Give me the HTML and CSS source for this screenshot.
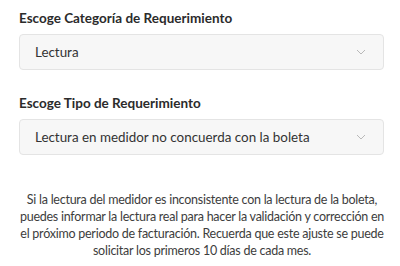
FILE: index.html
```html
<!DOCTYPE html>
<html lang="es">
<head>
<meta charset="utf-8">
<link rel="stylesheet" href="styles.css">
</head>
<body>
<div class="form">
  <div class="field">
    <label class="label">Escoge Categoría de Requerimiento</label>
    <div class="select">
      <span class="value">Lectura</span>
      <svg class="chev" width="10" height="6" viewBox="0 0 10 6"><path d="M1 1 L5 5 L9 1" fill="none" stroke="#b9b9b9" stroke-width="1"/></svg>
    </div>
  </div>
  <div class="field">
    <label class="label">Escoge Tipo de Requerimiento</label>
    <div class="select">
      <span class="value">Lectura en medidor no concuerda con la boleta</span>
      <svg class="chev" width="10" height="6" viewBox="0 0 10 6"><path d="M1 1 L5 5 L9 1" fill="none" stroke="#b9b9b9" stroke-width="1"/></svg>
    </div>
  </div>
  <p class="info">Si la lectura del medidor es inconsistente con la lectura de la boleta, puedes informar la lectura real para hacer la validación y corrección en el próximo periodo de facturación. Recuerda que este ajuste se puede solicitar los primeros 10 días de cada mes.</p>
</div>
</body>
</html>
```
FILE: styles.css
```css
html, body {
  margin: 0;
  padding: 0;
  background: #ffffff;
}
body {
  font-family: Lato, "Liberation Sans", sans-serif;
  color: #333333;
}
.form {
  padding: 9px 16px 0 19px;
  display: flex;
  flex-direction: column;
}
.field {
  display: flex;
  flex-direction: column;
  margin-bottom: 24px;
}
.field + .field {
  margin-bottom: 0;
}
.label {
  font-weight: 700;
  font-size: 13.5px;
  line-height: 18px;
  color: #2b2b2b;
  margin-bottom: 7px;
}
.select {
  height: 34px;
  border: 1px solid #e4e4e4;
  border-radius: 4px;
  background: #f7f7f7;
  display: flex;
  align-items: center;
  justify-content: space-between;
  padding: 0 17px 0 15px;
}
.value {
  font-size: 13.4px;
  color: #333333;
}
.chev {
  display: block;
}
.info {
  margin: 36px -3px 0 -2px;
  font-size: 12.5px;
  letter-spacing: -0.25px;
  line-height: 17px;
  text-align: center;
  color: #3d3d3d;
}
```
